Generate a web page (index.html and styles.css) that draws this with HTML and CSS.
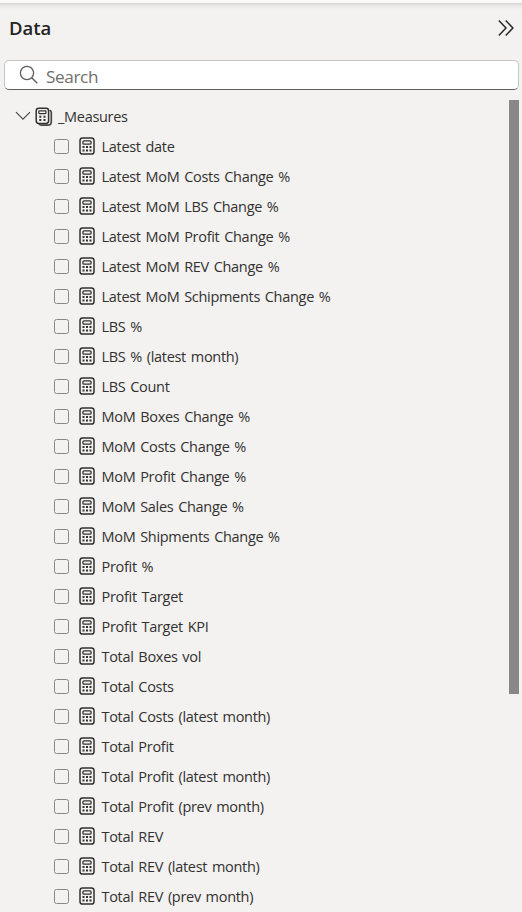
FILE: index.html
```html
<!DOCTYPE html>
<html lang="en">
<head>
<meta charset="utf-8">
<title>Data</title>
<link rel="stylesheet" href="styles.css">
</head>
<body>
<svg class="sprite" aria-hidden="true">
  <symbol id="calc" viewBox="0 0 16 18">
    <rect x="1" y="1" width="14" height="16" rx="2.6" fill="none" stroke="#323130" stroke-width="1.5"/>
    <rect x="3.9" y="3.8" width="8.2" height="3.4" rx="1.2" fill="none" stroke="#323130" stroke-width="1.3"/>
    <path d="M3.5 9h2v2h-2zM7 9h2v2H7zM10.5 9h2v2h-2zM3.5 12.5h2v2h-2zM7 12.5h2v2H7zM10.5 12.5h2v2h-2z" fill="#323130"/>
  </symbol>
</svg>
<aside class="pane">
  <header class="header">
    <h1 class="title">Data</h1>
    <svg class="collapse" width="18" height="18" viewBox="0 0 18 18"><path d="M1.8 1.5 9 9l-7.2 7.5M8.7 1.5l7.2 7.5-7.2 7.5" fill="none" stroke="#2b2a29" stroke-width="1.5"/></svg>
  </header>
  <label class="search">
    <svg width="20" height="20" viewBox="0 0 20 20"><circle cx="8" cy="8" r="6.6" fill="none" stroke="#605e5c" stroke-width="1.3"/><path d="m12.7 12.7 5.6 5.6" stroke="#605e5c" stroke-width="1.4"/></svg>
    <span class="placeholder">Search</span>
  </label>
  <div class="body">
    <div class="tree">
      <div class="group">
        <svg class="chevron" width="16" height="10" viewBox="0 0 16 10"><path d="m1 1.2 7 7 7-7" fill="none" stroke="#484644" stroke-width="1.1"/></svg>
        <svg class="stack" width="18" height="20" viewBox="0 0 18 20">
          <path d="M14.6 3.2c1.3.4 1.7 1.1 1.7 2.2v9.4c0 2.3-1.2 3.4-3.5 3.4H6.5c-1.2 0-2-.5-2.5-1.3" fill="none" stroke="#484644" stroke-width="1.7"/>
          <rect x="1.2" y="1.2" width="12.4" height="15.2" rx="2.6" fill="#f3f2f1" stroke="#323130" stroke-width="1.5"/>
          <rect x="3.8" y="3.8" width="7.2" height="2.8" rx=".8" fill="none" stroke="#323130" stroke-width="1.2"/>
          <path d="M4.3 8.7h2v2h-2zM8.5 8.7h2v2h-2zM4.3 12h2v2h-2zM8.5 12h2v2h-2z" fill="#323130"/>
        </svg>
        <span class="name">_Measures</span>
      </div>
      <div id="measures"></div>
    </div>
    <div class="scrollbar"></div>
  </div>
</aside>
<script src="script.js"></script>
</body>
</html>
```
FILE: styles.css
```css
* { box-sizing: border-box; }
body { margin: 0; background: #f3f2f1; color: #323130; font-family: "Open Sans", "Noto Sans", sans-serif; }
svg { display: block; flex: none; }
.sprite { position: absolute; width: 0; height: 0; }
.pane { height: 912px; overflow: hidden; border-top: 3px solid #faf9f8; background: linear-gradient(#d6d5d4, #ebeae9 3px, #f3f2f1 7px); }
.header { display: flex; align-items: center; justify-content: space-between; height: 57px; padding: 0 7px 8px 9px; }
.title { margin: 0; font-size: 18.5px; font-weight: 600; line-height: 26px; letter-spacing: 0; color: #252423; }
.search { display: flex; align-items: center; gap: 7px; height: 30px; margin: 0 3px 0 4px; padding-left: 14px; border: 1px solid #c8c6c4; border-bottom-color: #605e5c; border-radius: 5px; background: #fff; }
.placeholder { padding-top: 4px; font-size: 17.2px; line-height: 24px; letter-spacing: -.4px; color: #706e6c; }
.body { display: flex; justify-content: space-between; padding: 10px 3px 0 0; }
.tree { padding-top: 1px; }
.group, .row { display: flex; align-items: center; height: 30px; }
.group { padding-left: 15px; }
.stack { margin: 1px 5px 0 4px; }
.row { padding-left: 54px; }
.check { width: 15px; height: 15px; border: 1px solid #8a8886; border-radius: 2.5px; }
.calc { width: 16px; height: 18px; margin: 0 6.5px 0 10px; }
.name { padding-top: 2px; font-size: 14.5px; line-height: 20px; letter-spacing: -.3px; word-spacing: 1.3px; white-space: nowrap; }
.scrollbar { width: 10px; height: 594px; background: #8a8886; }
```
FILE: script.js
```js
const measures = [
  "Latest date", "Latest MoM Costs Change %", "Latest MoM LBS Change %",
  "Latest MoM Profit Change %", "Latest MoM REV Change %",
  "Latest MoM Schipments Change %", "LBS %", "LBS % (latest month)",
  "LBS Count", "MoM Boxes Change %", "MoM Costs Change %",
  "MoM Profit Change %", "MoM Sales Change %", "MoM Shipments Change %",
  "Profit %", "Profit Target", "Profit Target KPI", "Total Boxes vol",
  "Total Costs", "Total Costs (latest month)", "Total Profit",
  "Total Profit (latest month)", "Total Profit (prev month)", "Total REV",
  "Total REV (latest month)", "Total REV (prev month)"
];
document.getElementById("measures").innerHTML = measures.map(name =>
  `<div class="row"><span class="check"></span><svg class="calc"><use href="#calc"/></svg><span class="name">${name}</span></div>`
).join("");
```
